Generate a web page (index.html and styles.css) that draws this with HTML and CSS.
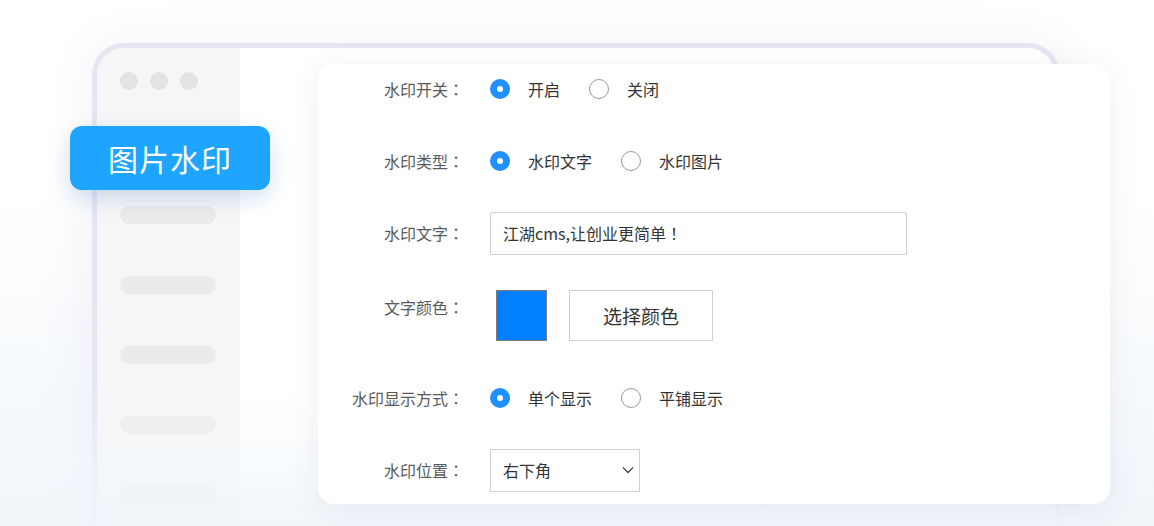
FILE: index.html
```html
<!DOCTYPE html>
<html lang="zh-CN">
<head>
    <meta charset="UTF-8">
    <title>图片水印</title>
    <link rel="stylesheet" href="styles.css">
</head>
<body>
    <div class="badge">图片水印</div>

    <div class="frame">
        <div class="sidebar">
            <div class="dots">
                <span></span><span></span><span></span>
            </div>
            <div class="bars">
                <span></span><span></span><span></span><span></span><span></span>
            </div>
        </div>
        <div class="main">
            <div class="card">
                <div class="row">
                    <div class="label">水印开关<span class="punct" lang="zh-TW">：</span></div>
                    <div class="field">
                        <label class="radio checked"><i></i>开启</label>
                        <label class="radio"><i></i>关闭</label>
                    </div>
                </div>
                <div class="row">
                    <div class="label">水印类型<span class="punct" lang="zh-TW">：</span></div>
                    <div class="field">
                        <label class="radio checked"><i></i>水印文字</label>
                        <label class="radio"><i></i>水印图片</label>
                    </div>
                </div>
                <div class="row">
                    <div class="label">水印文字<span class="punct" lang="zh-TW">：</span></div>
                    <div class="field">
                        <div class="text-input">江湖cms,让创业更简单<span class="punct" lang="zh-TW">！</span></div>
                    </div>
                </div>
                <div class="row row-color">
                    <div class="label">文字颜色<span class="punct" lang="zh-TW">：</span></div>
                    <div class="field">
                        <div class="swatch"></div>
                        <div class="btn-color">选择颜色</div>
                    </div>
                </div>
                <div class="row">
                    <div class="label">水印显示方式<span class="punct" lang="zh-TW">：</span></div>
                    <div class="field">
                        <label class="radio checked"><i></i>单个显示</label>
                        <label class="radio"><i></i>平铺显示</label>
                    </div>
                </div>
                <div class="row">
                    <div class="label">水印位置<span class="punct" lang="zh-TW">：</span></div>
                    <div class="field">
                        <div class="select">
                            <span>右下角</span>
                            <svg width="12" height="8" viewBox="0 0 12 8"><path d="M1 1.5 L6 6.5 L11 1.5" fill="none" stroke="#444" stroke-width="1.3"/></svg>
                        </div>
                    </div>
                </div>
            </div>
        </div>
    </div>

    <div class="fade"></div>
</body>
</html>
```

FILE: styles.css
```css
* {
    margin: 0;
    padding: 0;
    box-sizing: border-box;
    font-family: "Noto Sans CJK SC", "Noto Sans", sans-serif;
}

body {
    position: relative;
    width: 1154px;
    height: 526px;
    overflow: hidden;
    background: linear-gradient(to bottom, #fff 0%, #fff 35%, #f1f6fb 100%);
    padding: 43px 0 0 92px;
}

/* browser frame, cut off by the bottom edge */
.frame {
    display: flex;
    width: 968px;
    height: 483px;
    border: 5px solid #e6e5f1;
    border-bottom: none;
    border-radius: 32px 32px 0 0;
    background: #fff;
    box-shadow: 0 0 50px rgba(190, 195, 215, 0.22);
}

.sidebar {
    width: 143px;
    flex-shrink: 0;
    background: #f6f6f6;
    border-radius: 27px 0 0 0;
    padding: 24px 0 0 23px;
}

.dots {
    display: flex;
    gap: 12px;
}

.dots span {
    width: 18px;
    height: 18px;
    border-radius: 50%;
    background: #e3e3e3;
}

.bars {
    display: flex;
    flex-direction: column;
    gap: 52px;
    margin-top: 116px;
}

.bars span {
    width: 96px;
    height: 18px;
    border-radius: 9px;
    background: #ebebeb;
}

.main {
    flex: 1;
    min-width: 0;
    padding: 16px 0 0 78px;
}

/* form card */
.card {
    position: relative;
    z-index: 2;
    width: 792px;
    height: 440px;
    background: #fff;
    border-radius: 16px;
    box-shadow: 0 4px 30px rgba(60, 70, 90, 0.08);
    padding-top: 3px;
    display: flex;
    flex-direction: column;
    gap: 28px;
}

.row {
    display: flex;
    align-items: center;
    height: 44px;
}

.row-color {
    height: 51px;
    align-items: flex-start;
    margin: 7px 0;
}

.label {
    width: 146px;
    flex-shrink: 0;
    text-align: right;
    font-size: 16px;
    color: #5a5a5a;
}

/* full-width punctuation centred in its box */
.punct {
    font-family: "Noto Sans CJK TC", "Noto Sans CJK SC", sans-serif;
}

.row-color .label {
    line-height: 34px;
}

.field {
    display: flex;
    align-items: center;
    margin-left: 26px;
}

.radio {
    display: flex;
    align-items: center;
    font-size: 16px;
    color: #333;
    margin-right: 29px;
}

.radio i {
    width: 20px;
    height: 20px;
    border-radius: 50%;
    border: 1px solid #9a9a9a;
    background: #fff;
    margin-right: 18px;
}

.radio.checked i {
    border: 7px solid #1e90ff;
    background: #fff;
}

.text-input {
    width: 417px;
    height: 43px;
    border: 1px solid #cfcfcf;
    border-radius: 2px;
    padding-left: 12px;
    font-size: 16px;
    line-height: 41px;
    color: #333;
}

.swatch {
    width: 51px;
    height: 51px;
    margin-left: 6px;
    background: #0080ff;
    border: 1px solid #7d7d7d;
}

.btn-color {
    width: 144px;
    height: 51px;
    margin-left: 22px;
    border: 1px solid #cfcfcf;
    font-size: 19px;
    line-height: 49px;
    text-align: center;
    color: #333;
}

.select {
    display: flex;
    align-items: center;
    justify-content: space-between;
    width: 150px;
    height: 43px;
    border: 1px solid #cfcfcf;
    padding: 0 5px 0 12px;
    font-size: 16px;
    color: #333;
}

/* floating label */
.badge {
    position: absolute;
    z-index: 3;
    left: 70px;
    top: 126px;
    width: 200px;
    height: 64px;
    border-radius: 12px;
    background: #1da5ff;
    color: #fff;
    font-size: 30px;
    letter-spacing: 1px;
    line-height: 64px;
    text-align: center;
    box-shadow: 0 8px 22px rgba(40, 120, 190, 0.22);
}

.fade {
    position: absolute;
    z-index: 1;
    left: 0;
    right: 0;
    bottom: 0;
    height: 140px;
    background: linear-gradient(to bottom, rgba(243, 248, 253, 0) 0%, rgba(243, 248, 253, 0.55) 55%, rgba(240, 245, 250, 0.92) 100%);
    pointer-events: none;
}
```
